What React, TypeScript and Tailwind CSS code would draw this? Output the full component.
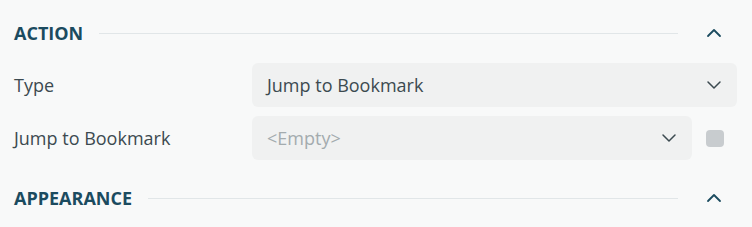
import { ChevronDown, ChevronUp } from 'lucide-react'

function SectionHeader({ title }: { title: string }) {
  return (
    <div className="flex h-[34px] items-center">
      <h2 className="text-[18px] font-bold text-[#1b4b5f]">{title}</h2>
      <div className="ml-4 h-px flex-1 bg-[#e1e6e8]" />
      <div className="flex w-[59px] pl-[24px]">
        <ChevronUp className="h-6 w-6 text-[#1b4b5f]" strokeWidth={1.8} />
      </div>
    </div>
  )
}

function Select({ value, placeholder }: { value?: string; placeholder?: string }) {
  return (
    <div className="flex h-[44px] flex-1 items-center justify-between rounded-md bg-[#f0f1f1] pl-[15px] pr-[11px]">
      <span className={value ? 'text-[#3c4a50]' : 'text-[#a3abae]'}>{value ?? placeholder}</span>
      <ChevronDown className="h-6 w-6 text-[#3c4a50]" strokeWidth={1.5} />
    </div>
  )
}

export default function App() {
  return (
    <div
      className="min-h-screen bg-[#f8f9f9] pl-[14px] pr-[15px] pt-[16px] text-[18px]"
      style={{ fontFamily: '"Open Sans", sans-serif' }}
    >
      {/* Action */}
      <SectionHeader title="ACTION" />
      <div className="mt-[13px] flex flex-col gap-[9px]">
        <div className="flex items-center">
          <label className="w-[238px] text-[#3c4a50]">Type</label>
          <Select value="Jump to Bookmark" />
        </div>
        <div className="flex items-center">
          <label className="w-[238px] text-[#3c4a50]">Jump to Bookmark</label>
          <Select placeholder="<Empty>" />
          <div className="ml-[14px] h-[17px] w-[18px] rounded-[4px] bg-[#c8cccf]" />
          <div className="w-[13px]" />
        </div>
      </div>

      {/* Appearance */}
      <div className="mt-[21px]">
        <SectionHeader title="APPEARANCE" />
      </div>
    </div>
  )
}
